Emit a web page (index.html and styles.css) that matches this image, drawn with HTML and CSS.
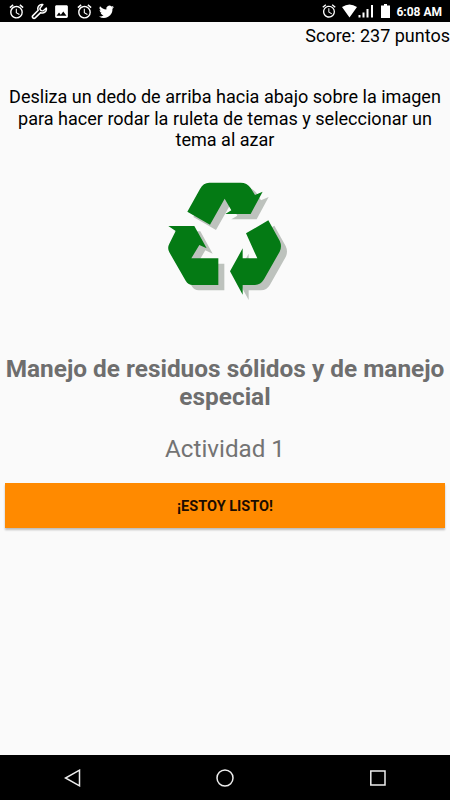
FILE: index.html
```html
<!DOCTYPE html>
<html lang="es">
<head>
    <meta charset="UTF-8">
    <meta name="viewport" content="width=device-width, initial-scale=1.0">
    <title>Ruleta de temas</title>
    <link rel="stylesheet" href="styles.css">
</head>
<body>
    <svg width="0" height="0" class="defs">
        <symbol id="alarm" viewBox="0 0 24 24">
            <path d="M22 5.72l-4.6-3.86-1.29 1.53 4.6 3.86L22 5.72zM7.88 3.39L6.6 1.86 2 5.71l1.29 1.53 4.59-3.85zM12.5 8H11v6l4.75 2.85.75-1.23-4-2.37V8zM12 4c-4.97 0-9 4.03-9 9s4.02 9 9 9a9 9 0 0 0 0-18zm0 16c-3.87 0-7-3.13-7-7s3.13-7 7-7 7 3.13 7 7-3.13 7-7 7z"/>
        </symbol>
    </svg>

    <div class="app-wrap">
        <div class="status-bar">
            <div class="notifications">
                <svg class="icon"><use href="#alarm"/></svg>
                <svg class="icon wrench" viewBox="0 0 17 17">
                    <path d="M11.800 1.600A4 4 0 0 0 7.200 7.200L1.900 12.600a1.500 1.500 0 0 0 2.300 2.300L9.600 9.600A4 4 0 0 0 15.300 5.100L12.800 7.200A1.900 1.900 0 1 1 9.700 4.200z"/>
                </svg>
                <svg class="icon" viewBox="0 0 24 24">
                    <path d="M21 19V5c0-1.100-.9-2-2-2H5c-1.100 0-2 .9-2 2v14c0 1.100.9 2 2 2h14c1.100 0 2-.9 2-2zM8.500 13.500l2.500 3.010L14.500 12l4.500 6H5l3.500-4.500z"/>
                </svg>
                <svg class="icon"><use href="#alarm"/></svg>
                <svg class="icon" viewBox="0 0 24 24">
                    <path d="M22.500 5.700c-.8.300-1.600.600-2.500.700.9-.5 1.600-1.400 1.900-2.400-.8.500-1.800.9-2.700 1.100a4.300 4.300 0 0 0-7.400 3.900C8.200 8.800 5 7.100 2.900 4.500a4.300 4.300 0 0 0 1.300 5.800c-.7 0-1.400-.2-1.900-.5 0 2.100 1.500 3.900 3.400 4.300-.6.200-1.300.2-1.900.1.500 1.700 2.100 2.900 4 3a8.600 8.600 0 0 1-6.400 1.800A12.200 12.200 0 0 0 20.400 8c.8-.6 1.500-1.400 2.100-2.300z"/>
                </svg>
            </div>
            <div class="system">
                <svg class="icon alarm"><use href="#alarm"/></svg>
                <svg class="signal" viewBox="0 0 34 14">
                    <path d="M1 3Q8.500 -2 16 3L8.500 13.500zM17.500 11h2v2.500h-2zM21.500 8.500h2v5h-2zM25.500 5h2v8.500h-2zM30 1h2v12.500h-2z"/>
                </svg>
                <svg class="battery" viewBox="0 0 9 14">
                    <path d="M3 0h3v1.500h3V14H0V1.500h3z"/>
                </svg>
                <span class="clock">6:08 AM</span>
            </div>
        </div>

        <main>
            <p class="score">Score: 237 puntos</p>
            <p class="help">Desliza un dedo de arriba hacia abajo sobre la imagen para hacer rodar la ruleta de temas y seleccionar un tema al azar</p>

            <svg class="topic-image" viewBox="0 0 450 420">
                <defs>
                    <g id="arrows">
                        <path d="M112 125L150 57Q160 38 178 38H272Q291 38 302 54L315 75 338 65 302 132H226L244 121 224 86 180 164z"/>
                        <path d="M55 168H133L170 235 148 225 124 265H205V345H128Q115 345 107 332L58 247Q51 234 58 221L77 183z"/>
                        <path d="M288 190L355 151 389 212Q397 229 389 245L342 328Q332 345 315 345H278V374L240 304 278 235V265H322z"/>
                    </g>
                    <clipPath id="edge"><path d="M0 0H411V420H0z"/></clipPath>
                </defs>
                <g clip-path="url(#edge)">
                    <use href="#arrows" class="shade" x="18" y="16"/>
                </g>
                <use href="#arrows" class="leaf"/>
            </svg>

            <h1>Manejo de residuos sólidos y de manejo especial</h1>
            <h2>Actividad 1</h2>
            <button class="ready">¡ESTOY LISTO!</button>
        </main>

        <nav class="nav-bar">
            <svg viewBox="0 0 18 18"><path d="M15.500 1.200V16.800L1.500 9z"/></svg>
            <svg viewBox="0 0 18 18"><circle cx="9" cy="9" r="8"/></svg>
            <svg viewBox="0 0 18 18"><path d="M1.800 2H16V16H1.800z"/></svg>
        </nav>
    </div>
</body>
</html>
```
FILE: styles.css
```css
*{
    margin: 0;
    padding: 0;
    box-sizing: border-box;
}

body{
    font-family: Roboto, sans-serif;
    background-color: #fafafa;
    color: #000;
}

.defs{
    display: none;
}

.app-wrap{
    display: flex;
    flex-direction: column;
    height: 100vh;
}

.status-bar{
    display: flex;
    justify-content: space-between;
    height: 22px;
    padding: 0 8px;
    background-color: #000;
    color: #fff;
    fill: #fff;
}

.notifications,
.system{
    display: flex;
    align-items: center;
}

.notifications{
    gap: 5.6px;
}

.icon{
    width: 17px;
    height: 17px;
}

.wrench{
    fill: none;
    stroke: #fff;
    stroke-width: 1.5;
    stroke-linejoin: round;
}

.alarm{
    width: 16px;
    height: 16px;
    margin-right: 4px;
}

.signal{
    width: 34px;
    height: 14px;
    margin-right: 6px;
}

.battery{
    width: 9px;
    height: 14px;
    margin-right: 6px;
}

.clock{
    padding-top: 1px;
    font-size: 12px;
    font-weight: 700;
    line-height: 22px;
}

main{
    flex: 1;
    display: flex;
    flex-direction: column;
    align-items: center;
    text-align: center;
}

.score{
    align-self: flex-end;
    margin-top: 3px;
    font-size: 18px;
    line-height: 21px;
}

.help{
    margin-top: 40.4px;
    padding: 0 5px;
    font-size: 18.06px;
    line-height: 21.2px;
}

.topic-image{
    width: 150px;
    height: 140px;
    margin-top: 20px;
}

.leaf{
    fill: #047a14;
}

.shade{
    fill: #bdc2bd;
}

h1{
    margin-top: 45px;
    font-size: 24.4px;
    line-height: 28px;
    color: #6e6e6e;
}

h2{
    margin-top: 24px;
    font-size: 24.2px;
    font-weight: 400;
    line-height: 28px;
    color: #737373;
}

.ready{
    width: 440px;
    height: 45px;
    margin-top: 20px;
    padding-top: 2px;
    border: none;
    background-color: #ff8a00;
    box-shadow: 0 2px 2px rgba(0, 0, 0, 0.25);
    font-family: inherit;
    font-size: 14.5px;
    font-weight: 700;
    color: #1c0c00;
}

.nav-bar{
    display: flex;
    justify-content: space-between;
    align-items: center;
    height: 45px;
    padding: 0 63.5px;
    background-color: #000;
}

.nav-bar svg{
    width: 18px;
    height: 18px;
    fill: none;
    stroke: #eee;
    stroke-width: 1.5;
}
```
